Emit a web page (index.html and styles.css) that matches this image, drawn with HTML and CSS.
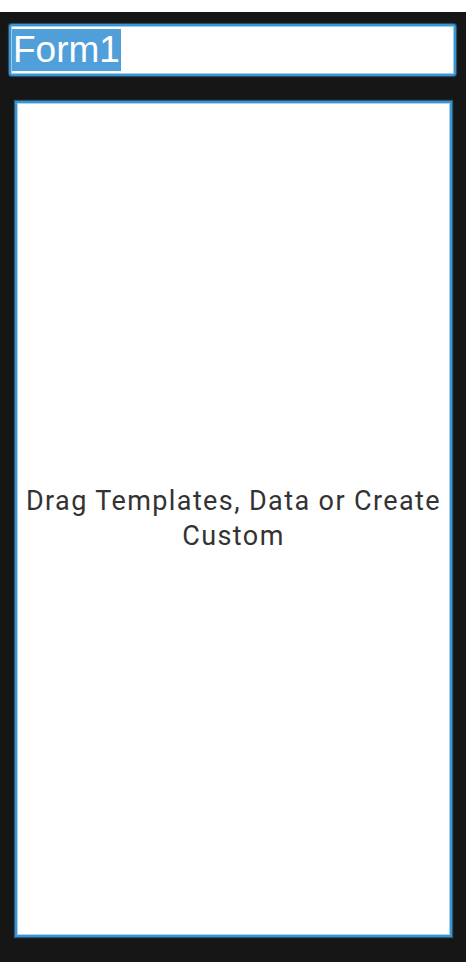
FILE: index.html
```html
<!DOCTYPE html>
<html>
<head>
<meta charset="utf-8">
<link rel="stylesheet" href="styles.css">
</head>
<body>
<div class="panel">
  <div class="name-field"><span class="selected">Form1</span></div>
  <div class="drop-zone">
    <p class="hint">Drag Templates, Data or Create Custom</p>
  </div>
</div>
</body>
</html>
```
FILE: styles.css
```css
html, body {
  margin: 0;
  padding: 0;
  background: #ffffff;
}
body {
  padding: 12px 8px 12px 0;
}
.panel {
  background: #161616;
  height: 950px;
  box-sizing: border-box;
  padding: 12px 10px 25px 9px;
  display: flex;
  flex-direction: column;
}
.name-field {
  height: 52px;
  box-sizing: border-box;
  background: #ffffff;
  border: 2px solid #3b95d2;
  border-radius: 3px;
  box-shadow: inset 0 0 0 1px #9fcdee, 0 0 1px 1px rgba(59,149,210,0.5);
  padding: 0 0 0 1px;
  display: flex;
  align-items: center;
  font-family: "Liberation Sans", Arial, sans-serif;
  font-size: 37px;
  line-height: 42px;
}
.selected {
  background: #519fd8;
  color: #ffffff;
  padding: 0 1px 0 1px;
}
.drop-zone {
  margin: 25px 4px 0 6px;
  flex: 1;
  background: #ffffff;
  border: 2px solid #3b95d2;
  box-shadow: inset 0 0 0 1px #a9d3f0, 0 0 1px 1px rgba(59,149,210,0.5);
  display: flex;
  align-items: center;
  justify-content: center;
}
.hint {
  margin: 0;
  font-family: Roboto, sans-serif;
  font-size: 27px;
  letter-spacing: 1.4px;
  line-height: 35px;
  color: #333333;
  text-align: center;
  padding: 0 2px;
}
```
